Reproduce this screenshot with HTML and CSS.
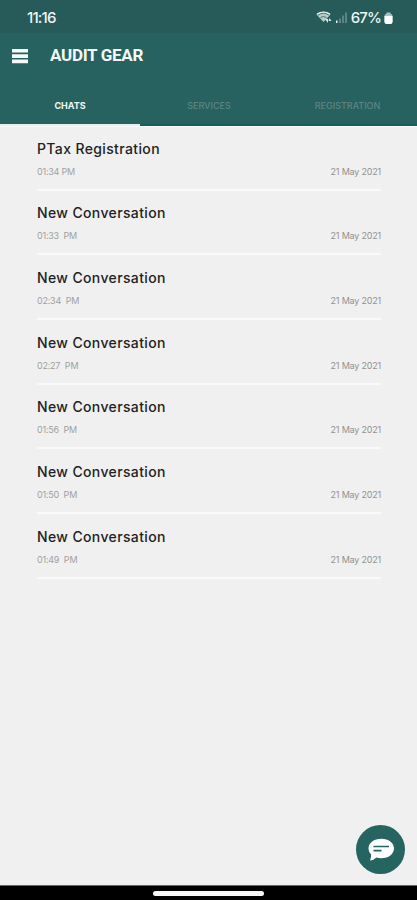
FILE: index.html
```html
<!DOCTYPE html>
<html lang="en">
<head>
<meta charset="utf-8">
<title>Audit Gear</title>
<link rel="stylesheet" href="styles.css">
</head>
<body>
<div class="app">
  <div class="status">
    <span class="clock">11:16</span>
    <div class="indicators">
      <svg width="33" height="16" viewBox="0 0 33 16">
        <path d="M.5 4.500Q7.500-.8 14.500 4.500L7.500 12Z" fill="#b5cccb"/>
        <path d="M2 5.200Q7.500 1.200 13 5.200M4.500 7.500Q7.500 5.500 10.500 7.500" fill="none" stroke="#33605f" stroke-width=".8"/>
        <path d="M1 4Q7.500 0 14 4" fill="none" stroke="#edf6f5" stroke-width="1.200"/>
        <path d="M9 9h3v4zM13.500 8l2 3h-3z" fill="#dce9e8"/>
        <path d="M20 10.500h1.500V13H20z" fill="#edf6f5"/>
        <path d="M23 8.500h2V13h-2zM26 5.500h2V13h-2zM29 2.500h2V13h-2z" fill="#598684"/>
      </svg>
      <span class="percent">67%</span>
      <svg class="battery" width="9" height="14" viewBox="0 0 9 14">
        <path d="M2.500 1.500h4v1.200Q8.500 3 8.500 5v5.500q0 2.500-2.500 2.500H3Q.5 13 .5 10.500V5Q.5 3 2.500 2.700z" fill="#a9c2bf"/>
        <path d="M.5 5h8v5.500Q8.500 13 6 13H3Q.5 13 .5 10.500z" fill="#fff"/>
      </svg>
    </div>
  </div>
  <header class="bar">
    <svg width="16" height="15" viewBox="0 0 16 15"><path d="M0 0h16v3.600H0zM0 5.300h16v3.600H0zM0 10.600h16v3.600H0z" fill="#f5faf9"/></svg>
    <h1>AUDIT GEAR</h1>
  </header>
  <nav class="tabs">
    <div class="tab active">CHATS</div>
    <div class="tab">SERVICES</div>
    <div class="tab">REGISTRATION</div>
  </nav>
  <main class="list">
    <article class="row"><h2>PTax Registration</h2><p><span class="time">01:34 PM</span><span class="date">21 May 2021</span></p></article>
    <article class="row"><h2>New Conversation</h2><p><span class="time">01:33&nbsp; PM</span><span class="date">21 May 2021</span></p></article>
    <article class="row"><h2>New Conversation</h2><p><span class="time">02:34&nbsp; PM</span><span class="date">21 May 2021</span></p></article>
    <article class="row"><h2>New Conversation</h2><p><span class="time">02:27&nbsp; PM</span><span class="date">21 May 2021</span></p></article>
    <article class="row"><h2>New Conversation</h2><p><span class="time">01:56&nbsp; PM</span><span class="date">21 May 2021</span></p></article>
    <article class="row"><h2>New Conversation</h2><p><span class="time">01:50&nbsp; PM</span><span class="date">21 May 2021</span></p></article>
    <article class="row"><h2>New Conversation</h2><p><span class="time">01:49&nbsp; PM</span><span class="date">21 May 2021</span></p></article>
  </main>
  <div class="navbar"><div class="pill"></div></div>
  <div class="fab">
    <svg width="28" height="26" viewBox="0 0 28 26">
      <path d="M14.300 1.700c7.200 0 12.700 4.200 12.700 9.700s-5.500 9.800-12.700 9.800q-2.700 0-5-.8-2.600 2.800-6.300 3.200 1.500-3.200 1-6.400-2.500-2.500-2.500-5.800c0-5.500 5.600-9.700 12.800-9.700z" fill="#fff"/>
      <path d="M6.500 9.500h15.500M6.500 13.600h8" stroke="#266461" stroke-width="1.700"/>
    </svg>
  </div>
</div>
</body>
</html>
```
FILE: styles.css
```css
* { box-sizing: border-box; margin: 0; padding: 0; }
body { width: 417px; height: 900px; background: #f0f0f0; font-family: Inter, "Open Sans", sans-serif; }
.app { position: relative; display: flex; flex-direction: column; height: 900px; overflow: hidden; }
.status { display: flex; justify-content: space-between; align-items: center; height: 33px; padding: 2px 24px 0 27px; background: #265b59; color: #edf6f5; }
.clock { font: 500 15px/20px Inter, sans-serif; letter-spacing: -.8px; padding-top: 1px; }
.indicators { display: flex; align-items: center; }
.percent { margin-left: 2px; font: 500 15px/20px Inter, sans-serif; letter-spacing: -.9px; padding-top: 1px; }
.battery { margin-left: 3px; }
.bar { display: flex; align-items: center; gap: 22px; height: 46px; padding-left: 12px; background: #276260; }
.bar svg { margin-top: 1px; }
.bar h1 { margin-top: -2px; color: #f3f9f8; font: 700 17px/22px Roboto, sans-serif; letter-spacing: -.3px; }
.tabs { display: grid; grid-template-columns: 140px 138px 139px; height: 47px; background: #276260; }
.tab { display: flex; justify-content: center; align-items: center; padding-top: 9px; border-bottom: 2px solid #126059; color: #5e8482; font: 500 9px/12px Inter, sans-serif; }
.active { color: #edf6f5; font-weight: 700; border-color: #e5efef; }
.list { flex: 1; padding: 0 36px 0 37px; border-top: 1px solid #fafafa; }
.row { height: 64.700px; padding-top: 12.700px; border-bottom: 2px solid #f9f9f9; }
.row:first-child { height: 63.500px; padding-top: 11.500px; }
.row h2 { color: #222; font: 500 14px/20px Inter, sans-serif; letter-spacing: .37px; white-space: nowrap; }
.row p { display: flex; justify-content: space-between; margin-top: 7px; color: #929292; font: 400 9px/12px Inter, sans-serif; }
.time { letter-spacing: -.22px; color: #a0a0a0; }
.date { letter-spacing: -.2px; }
.navbar { display: flex; justify-content: center; height: 15px; padding-top: 5px; border-top: 1px solid #666; background: #000; }
.pill { width: 111px; height: 5px; border-radius: 3px; background: #f7f7f7; }
.fab { position: absolute; right: 12px; bottom: 26px; display: flex; align-items: center; justify-content: center; width: 49px; height: 49px; border-radius: 50%; background: #266461; }
```
